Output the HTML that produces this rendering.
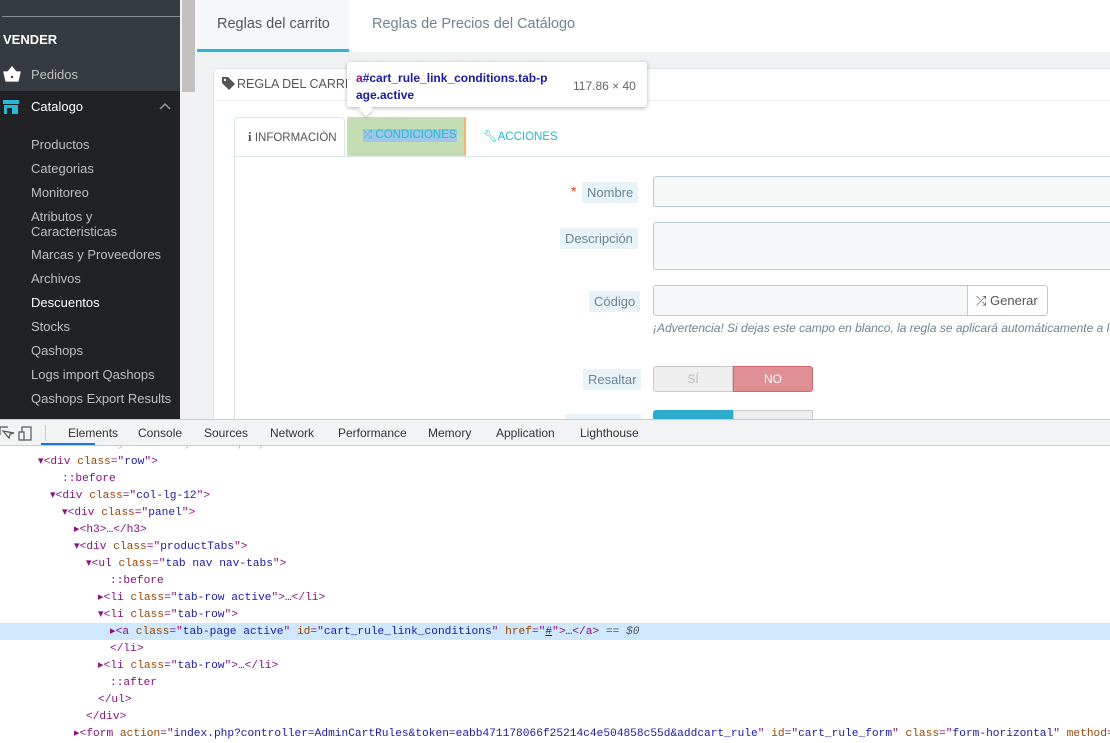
<!DOCTYPE html>
<html><head><meta charset="utf-8"><style>
*{box-sizing:border-box;margin:0;padding:0}
body{width:1110px;height:743px;overflow:hidden;font-family:"Liberation Sans",sans-serif;background:#eff1f2;position:relative;font-size:13px}
.a{position:absolute}
.sb{left:0;top:0;width:180px;height:419px;background:#363a41}
.sbd{left:0;top:91px;width:180px;height:328px;background:#202226}
.sbi{color:#bebebe;font-size:13px;left:31px}
.lbl{background:#e7f3f9;color:#6c868e;font-size:13px;padding:3px 5px;border-radius:2px}
.inp{background:#f5f8f9;border:1px solid #bbcdd2;border-radius:3px}
.dt{left:0;top:419px;width:1110px;height:324px;background:#fff}
.code{font-family:"Liberation Mono",monospace;font-size:11.2px;color:#881280;white-space:pre;line-height:17px}
.t{color:#881280}.at{color:#994500}.v{color:#1a1aa6}.g{color:#222}.p{color:#555}
</style></head><body>
<div class="a sb"></div>
<div class="a" style="left:2px;top:16px;width:178px;height:1px;background:#8a8d92"></div>
<div class="a" style="left:3px;top:32px;color:#fff;font-weight:bold;font-size:13px">VENDER</div>
<svg class="a" style="left:3px;top:66px" width="18" height="16" viewBox="0 0 18 16"><path d="M1 6h16l-2 9H3z M5 6l4-5 4 5" fill="#fff" stroke="#fff" stroke-width="1.3"/><circle cx="9" cy="11" r="1.2" fill="#363a41"/></svg>
<div class="a" style="left:31px;top:67px;color:#bebebe;font-size:13px">Pedidos</div>
<div class="a sbd"></div>
<svg class="a" style="left:3px;top:100px" width="16" height="14" viewBox="0 0 16 14"><rect x="0" y="0" width="16" height="4" fill="#25b9d7"/><rect x="1" y="5" width="14" height="9" fill="#25b9d7"/><rect x="4" y="8" width="5" height="6" fill="#202226"/></svg>
<div class="a" style="left:31px;top:99px;color:#fff;font-size:13px">Catalogo</div>
<svg class="a" style="left:159px;top:102px" width="12" height="8"><path d="M1 7l5-5 5 5" fill="none" stroke="#999" stroke-width="1.5"/></svg>
<div class="a sbi" style="top:137px">Productos</div>
<div class="a sbi" style="top:161px">Categorias</div>
<div class="a sbi" style="top:185px">Monitoreo</div>
<div class="a sbi" style="top:209px;line-height:15px">Atributos y<br>Caracteristicas</div>
<div class="a sbi" style="top:247px">Marcas y Proveedores</div>
<div class="a sbi" style="top:271px">Archivos</div>
<div class="a sbi" style="top:295px;color:#fff">Descuentos</div>
<div class="a sbi" style="top:319px">Stocks</div>
<div class="a sbi" style="top:343px">Qashops</div>
<div class="a sbi" style="top:367px">Logs import Qashops</div>
<div class="a sbi" style="top:391px">Qashops Export Results</div>
<div class="a" style="left:180px;top:0;width:16px;height:419px;background:#f1f1f1"></div>
<div class="a" style="left:182px;top:0;width:13px;height:92px;background:#c1c1c1"></div>
<div class="a" style="left:196px;top:0;width:914px;height:52px;background:#fff"></div>
<div class="a" style="left:197px;top:0;width:152px;height:52px;background:#f5f8f9;border-bottom:3px solid #25b9d7"></div>
<div class="a" style="left:217px;top:16px;font-size:14.5px;color:#555">Reglas del carrito</div>
<div class="a" style="left:372px;top:16px;font-size:14.5px;color:#6c868e">Reglas de Precios del Catálogo</div>
<div class="a" style="left:213px;top:68px;width:910px;height:360px;background:#fff;border:1px solid #dbe6e9;border-radius:5px"></div>
<svg class="a" style="left:222px;top:77px" width="13" height="13" viewBox="0 0 13 13"><path d="M0 0h6l7 7-6 6-7-7z" fill="#555"/><circle cx="3" cy="3" r="1.2" fill="#fff"/></svg>
<div class="a" style="left:237px;top:77px;font-size:12.5px;color:#555">REGLA DEL CARRITO</div>
<div class="a" style="left:217px;top:100px;width:893px;height:1px;background:#eee"></div>
<div class="a" style="left:234px;top:117px;width:111px;height:40px;background:#fff;border:1px solid #dbe6e9;border-bottom:none;border-radius:4px 4px 0 0"></div>
<div class="a" style="left:234px;top:156px;width:880px;height:270px;border-left:1px solid #dbe6e9;border-top:1px solid #dbe6e9"></div>
<div class="a" style="left:248px;top:129px;font-size:11.5px;color:#555"><b style="font-family:'Liberation Serif',serif;font-size:13px">i</b> INFORMACIÓN</div>
<div class="a" style="left:347px;top:117px;width:119px;height:39px;background:#c4deb4;border:1px solid #f0d39c;border-right:2px solid #f2b46f"></div>
<div class="a" style="left:363px;top:129px;font-size:11.5px;color:#25b9d7;background:#9fc6e6">⤮ CONDICIONES</div>
<div class="a" style="left:483px;top:129px;font-size:11.5px;color:#25b9d7">🔧︎ACCIONES</div>
<div class="a" style="left:571px;top:183px;color:#e32;font-size:14px">*</div>
<div class="a lbl" style="left:582px;top:182px">Nombre</div>
<div class="a inp" style="left:653px;top:176px;width:470px;height:31px"></div>
<div class="a lbl" style="left:560px;top:228px">Descripción</div>
<div class="a inp" style="left:653px;top:222px;width:470px;height:48px"></div>
<div class="a lbl" style="left:589px;top:291px">Código</div>
<div class="a inp" style="left:653px;top:285px;width:316px;height:31px;border-radius:3px 0 0 3px"></div>
<div class="a" style="left:967px;top:285px;width:81px;height:31px;background:#fff;border:1px solid #bbcdd2;border-radius:0 3px 3px 0;font-size:13px;color:#555;padding:7px 0 0 8px">⤮ Generar</div>
<div class="a" style="left:653px;top:321px;font-size:12px;font-style:italic;color:#6c868e;white-space:nowrap">¡Advertencia! Si dejas este campo en blanco, la regla se aplicará automáticamente a los</div>
<div class="a lbl" style="left:583px;top:369px">Resaltar</div>
<div class="a" style="left:653px;top:366px;width:80px;height:26px;background:#eee;border:1px solid #ccc;border-radius:3px 0 0 3px;color:#bbb;font-size:12px;text-align:center;line-height:24px">SÍ</div>
<div class="a" style="left:733px;top:366px;width:80px;height:26px;background:#e08f95;border:1px solid #d4656d;border-radius:0 3px 3px 0;color:#fff;font-size:12px;text-align:center;line-height:24px">NO</div>
<div class="a" style="left:565px;top:414px;width:76px;height:6px;background:#e7f3f9"></div>
<div class="a" style="left:653px;top:410px;width:80px;height:10px;background:#2eacce;border-radius:3px 0 0 0"></div>
<div class="a" style="left:733px;top:410px;width:80px;height:10px;background:#eee;border:1px solid #ccc"></div>
<div class="a" style="left:347px;top:62px;width:300px;height:45px;background:#fff;border-radius:3px;box-shadow:0 1px 4px rgba(0,0,0,.3)"></div>
<div class="a" style="left:361px;top:104px;width:10px;height:10px;background:#fff;transform:rotate(45deg);box-shadow:2px 2px 3px rgba(0,0,0,.15)"></div>
<div class="a" style="left:356px;top:70px;font-size:12px;font-weight:bold;color:#1a1aa6;line-height:17px"><span style="color:#881280">a</span>#cart_rule_link_conditions.tab-p<br>age.active</div>
<div class="a" style="left:573px;top:79px;font-size:12px;color:#666">117.86 × 40</div>
<div class="a dt"></div>
<div class="a code" style="left:50px;top:436px;color:#bbb">&lt;div id="ajaxBox" style="display:none"&gt;&lt;/div&gt;</div>
<div class="a" style="left:0;top:419px;width:1110px;height:27px;background:#f1f3f4;border-top:1px solid #ccc;border-bottom:1px solid #ccc"></div>
<svg class="a" style="left:0;top:425px" width="42" height="16"><path d="M0 2h8M0 2v8 M3 6l6 7 1-4 4-1z" fill="none" stroke="#555" stroke-width="1.2"/><rect x="22" y="2" width="9" height="13" fill="none" stroke="#555" stroke-width="1.2"/><rect x="19" y="7" width="5" height="8" fill="#f1f3f4" stroke="#555" stroke-width="1.2"/></svg>
<div class="a" style="left:45px;top:425px;width:1px;height:16px;background:#ccc"></div>
<div class="a" style="left:41px;top:443px;width:54px;height:2px;background:#1a73e8"></div>
<div class="a" style="top:426px;left:68px;font-size:12px;color:#333">Elements</div>
<div class="a" style="top:426px;left:138px;font-size:12px;color:#333">Console</div>
<div class="a" style="top:426px;left:204px;font-size:12px;color:#333">Sources</div>
<div class="a" style="top:426px;left:270px;font-size:12px;color:#333">Network</div>
<div class="a" style="top:426px;left:338px;font-size:12px;color:#333">Performance</div>
<div class="a" style="top:426px;left:428px;font-size:12px;color:#333">Memory</div>
<div class="a" style="top:426px;left:496px;font-size:12px;color:#333">Application</div>
<div class="a" style="top:426px;left:580px;font-size:12px;color:#333">Lighthouse</div>
<div class="a" style="left:0;top:623px;width:1110px;height:17px;background:#cfe8fc"></div>
<div class="a code" style="left:38px;top:454px">▾<span class="t">&lt;div </span><span class="at">class</span><span class="t">="</span><span class="v">row</span><span class="t">"&gt;</span></div>
<div class="a code" style="left:62px;top:471px"><span class="t">::before</span></div>
<div class="a code" style="left:50px;top:488px">▾<span class="t">&lt;div </span><span class="at">class</span><span class="t">="</span><span class="v">col-lg-12</span><span class="t">"&gt;</span></div>
<div class="a code" style="left:62px;top:505px">▾<span class="t">&lt;div </span><span class="at">class</span><span class="t">="</span><span class="v">panel</span><span class="t">"&gt;</span></div>
<div class="a code" style="left:74px;top:522px">▸<span class="t">&lt;h3&gt;</span><span class="g">…</span><span class="t">&lt;/h3&gt;</span></div>
<div class="a code" style="left:74px;top:539px">▾<span class="t">&lt;div </span><span class="at">class</span><span class="t">="</span><span class="v">productTabs</span><span class="t">"&gt;</span></div>
<div class="a code" style="left:86px;top:556px">▾<span class="t">&lt;ul </span><span class="at">class</span><span class="t">="</span><span class="v">tab nav nav-tabs</span><span class="t">"&gt;</span></div>
<div class="a code" style="left:110px;top:573px"><span class="t">::before</span></div>
<div class="a code" style="left:98px;top:590px">▸<span class="t">&lt;li </span><span class="at">class</span><span class="t">="</span><span class="v">tab-row active</span><span class="t">"&gt;</span><span class="g">…</span><span class="t">&lt;/li&gt;</span></div>
<div class="a code" style="left:98px;top:607px">▾<span class="t">&lt;li </span><span class="at">class</span><span class="t">="</span><span class="v">tab-row</span><span class="t">"&gt;</span></div>
<div class="a code" style="left:110px;top:624px">▸<span class="t">&lt;a </span><span class="at">class</span><span class="t">="</span><span class="v">tab-page active</span><span class="t">" </span><span class="at">id</span><span class="t">="</span><span class="v">cart_rule_link_conditions</span><span class="t">" </span><span class="at">href</span><span class="t">="</span><span class="v" style="text-decoration:underline">#</span><span class="t">"&gt;</span><span class="g">…</span><span class="t">&lt;/a&gt;</span><span class="p"> == <i>$0</i></span></div>
<div class="a code" style="left:110px;top:641px"><span class="t">&lt;/li&gt;</span></div>
<div class="a code" style="left:98px;top:658px">▸<span class="t">&lt;li </span><span class="at">class</span><span class="t">="</span><span class="v">tab-row</span><span class="t">"&gt;</span><span class="g">…</span><span class="t">&lt;/li&gt;</span></div>
<div class="a code" style="left:110px;top:675px"><span class="t">::after</span></div>
<div class="a code" style="left:98px;top:692px"><span class="t">&lt;/ul&gt;</span></div>
<div class="a code" style="left:86px;top:709px"><span class="t">&lt;/div&gt;</span></div>
<div class="a code" style="left:74px;top:726px">▸<span class="t">&lt;form </span><span class="at">action</span><span class="t">="</span><span class="v">index.php?controller=AdminCartRules&amp;token=eabb471178066f25214c4e504858c55d&amp;addcart_rule</span><span class="t">" </span><span class="at">id</span><span class="t">="</span><span class="v">cart_rule_form</span><span class="t">" </span><span class="at">class</span><span class="t">="</span><span class="v">form-horizontal</span><span class="t">" </span><span class="at">method</span><span class="t">="p</span></div>
</body></html>
